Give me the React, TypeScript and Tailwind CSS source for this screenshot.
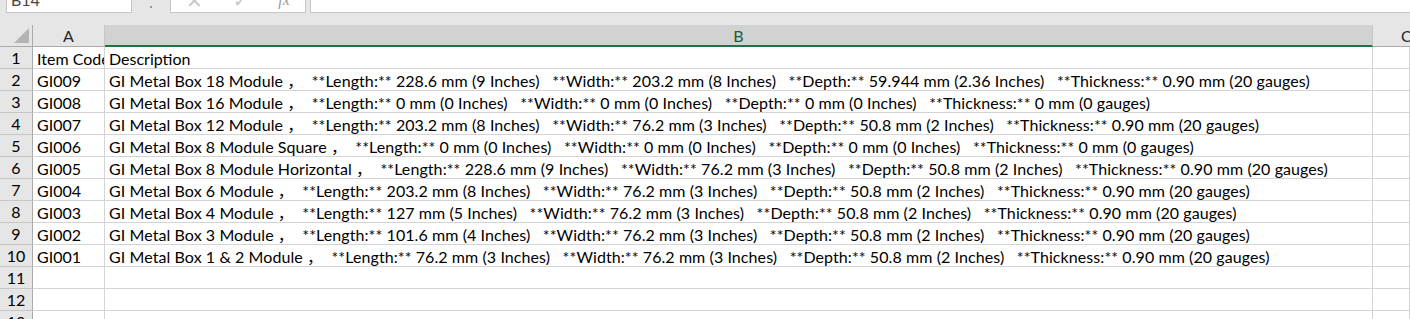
import React from "react";

type Item = { code: string; name: string; fields: string[] };

const items: Item[] = [
  { code: "GI009", name: "GI Metal Box 18 Module", fields: ["228.6 mm (9 Inches)", "203.2 mm (8 Inches)", "59.944 mm (2.36 Inches)", "0.90 mm (20 gauges)"] },
  { code: "GI008", name: "GI Metal Box 16 Module", fields: ["0 mm (0 Inches)", "0 mm (0 Inches)", "0 mm (0 Inches)", "0 mm (0 gauges)"] },
  { code: "GI007", name: "GI Metal Box 12 Module", fields: ["203.2 mm (8 Inches)", "76.2 mm (3 Inches)", "50.8 mm (2 Inches)", "0.90 mm (20 gauges)"] },
  { code: "GI006", name: "GI Metal Box 8 Module Square", fields: ["0 mm (0 Inches)", "0 mm (0 Inches)", "0 mm (0 Inches)", "0 mm (0 gauges)"] },
  { code: "GI005", name: "GI Metal Box 8 Module Horizontal", fields: ["228.6 mm (9 Inches)", "76.2 mm (3 Inches)", "50.8 mm (2 Inches)", "0.90 mm (20 gauges)"] },
  { code: "GI004", name: "GI Metal Box 6 Module", fields: ["203.2 mm (8 Inches)", "76.2 mm (3 Inches)", "50.8 mm (2 Inches)", "0.90 mm (20 gauges)"] },
  { code: "GI003", name: "GI Metal Box 4 Module", fields: ["127 mm (5 Inches)", "76.2 mm (3 Inches)", "50.8 mm (2 Inches)", "0.90 mm (20 gauges)"] },
  { code: "GI002", name: "GI Metal Box 3 Module", fields: ["101.6 mm (4 Inches)", "76.2 mm (3 Inches)", "50.8 mm (2 Inches)", "0.90 mm (20 gauges)"] },
  { code: "GI001", name: "GI Metal Box 1 & 2 Module", fields: ["76.2 mm (3 Inches)", "76.2 mm (3 Inches)", "50.8 mm (2 Inches)", "0.90 mm (20 gauges)"] },
];

const labels = ["Length", "Width", "Depth", "Thickness"];

function Description({ item }: { item: Item }) {
  return (
    <span className="whitespace-pre tracking-[0.08px]">
      {item.name + " "}
      <span className="font-['Noto_Sans_CJK_SC']">，</span>
      {"  " + item.fields.map((f, i) => `**${labels[i]}:** ${f}`).join("   ")}
    </span>
  );
}

const rowHead = "flex items-center justify-center bg-[#e6e6e6] border-r border-r-[#ababab] border-b border-b-[#c6c6c6] pt-[1px]";
const cell = "flex items-center overflow-hidden border-r border-b border-[#d4d4d4] bg-white pt-[2px]";

export default function App() {
  const blanks = [11, 12, 13];
  return (
    <div className="h-[319px] w-[1410px] overflow-hidden bg-[#e6e6e6] font-['Lato',sans-serif] text-[16px] leading-none text-black">
      {/* formula bar, only its lower edge shows */}
      <div className="flex h-[13px] items-end overflow-hidden">
        <div className="ml-[6px] flex h-[26px] w-[126px] shrink-0 items-center border border-[#c6c6c6] bg-white pl-[4px] text-[#444]">B14</div>
        <div className="flex w-[38px] shrink-0 justify-center pb-[5px]">
          <span className="h-[2px] w-[2px] bg-[#9a9a9a]" />
        </div>
        <div className="flex h-[26px] w-[136px] shrink-0 items-center justify-around border border-[#c6c6c6] bg-white text-[#c8c8c8]">
          <span className="text-[20px]">✕</span>
          <span className="text-[18px]">✓</span>
          <span className="font-['Liberation_Serif',serif] italic text-[#9a9a9a]">fx</span>
        </div>
        <div className="ml-[4px] h-[26px] flex-1 border border-r-0 border-[#c6c6c6] bg-white" />
      </div>
      <div className="h-[12px]" />

      <div className="grid grid-cols-[33px_72px_1268px_1fr] auto-rows-[22px]">
        {/* header row */}
        <div className="relative border-r border-b border-[#ababab] bg-[#e6e6e6]">
          <svg className="absolute right-[3px] bottom-[3px]" width="15" height="15" viewBox="0 0 15 15">
            <polygon points="15,0 15,15 0,15" fill="#b4b4b4" />
          </svg>
        </div>
        <div className="flex items-center justify-center border-r border-r-[#c6c6c6] border-b border-b-[#ababab] bg-[#e6e6e6] text-[#262626]">A</div>
        <div className="flex items-center justify-center border-r border-r-[#c6c6c6] border-b-2 border-b-[#217346] bg-[#d2d2d2] pt-[1px] text-[#1d5c3a]">B</div>
        <div className="flex items-center overflow-hidden border-b border-b-[#ababab] bg-[#e6e6e6] pl-[28px] text-[#262626]">C</div>

        {/* row 1 */}
        <div className={rowHead}>1</div>
        <div className={cell + " pl-[4px] whitespace-nowrap"}>Item Code</div>
        <div className={cell + " pl-[4px]"}>Description</div>
        <div className={cell} />

        {items.map((item, i) => (
          <React.Fragment key={item.code}>
            <div className={rowHead}>{i + 2}</div>
            <div className={cell + " pl-[4px]"}>{item.code}</div>
            <div className={cell + " pl-[4px]"}>
              <Description item={item} />
            </div>
            <div className={cell} />
          </React.Fragment>
        ))}

        {blanks.map((n) => (
          <React.Fragment key={n}>
            <div className={rowHead}>{n}</div>
            <div className={cell} />
            <div className={cell} />
            <div className={cell} />
          </React.Fragment>
        ))}
      </div>
    </div>
  );
}
